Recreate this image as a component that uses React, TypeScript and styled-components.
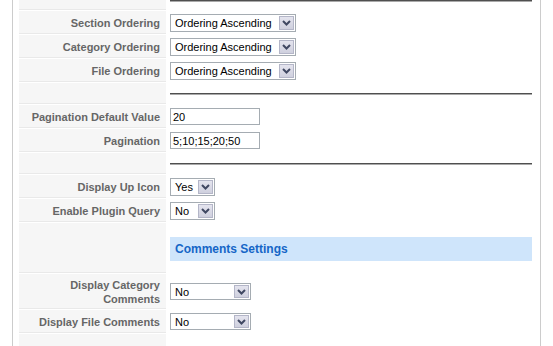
import React from 'react';
import styled, { createGlobalStyle } from 'styled-components';

/* ───────────── global ───────────── */

const GlobalStyle = createGlobalStyle`
	html, body {
		margin: 0;
		padding: 0;
		background: #ffffff;
		overflow: hidden;
	}
	body {
		font-family: "Liberation Sans", Arial, sans-serif;
		font-size: 11px;
	}
`;

/* ───────────── layout ───────────── */

const Frame = styled.div`
	margin-left: 12px;
	width: 521px;
	height: 346px;
	border-left: 1px solid #cccccc;
	border-right: 1px solid #cccccc;
	padding-left: 6px;
	box-sizing: content-box;
	display: flex;
	flex-direction: column;
	gap: 1px;
`;

const Row = styled.div<{ $h: number }>`
	display: grid;
	grid-template-columns: 147px 1fr;
	column-gap: 1px;
	height: ${({ $h }) => $h + 1}px;
	flex-shrink: 0;
`;

const Key = styled.div`
	background: #f6f6f6;
	border-bottom: 1px solid #e9e9e9;
	color: #666666;
	font-weight: bold;
	font-size: 11px;
	line-height: 14px;
	text-align: right;
	padding: 1px 6px 0 4px;
	display: flex;
	align-items: center;
	justify-content: flex-end;
`;

const Value = styled.div<{ $top?: boolean; $pt?: number }>`
	padding: ${({ $pt }) => $pt ?? 0}px 8px 0 3px;
	display: flex;
	align-items: ${({ $top }) => ($top ? 'flex-start' : 'center')};
`;

const Rule = styled.div`
	width: 100%;
	height: 0;
	border-top: 1px solid #4f4f4f;
	border-bottom: 1px solid #a9a9a9;
`;

/* ───────────── form controls ───────────── */

const SelectBox = styled.div<{ $w: number; $hgt: number }>`
	width: ${({ $w }) => $w}px;
	height: ${({ $hgt }) => $hgt}px;
	box-sizing: border-box;
	border: 1px solid #a5acb2;
	background: #ffffff;
	display: flex;
	align-items: stretch;
`;

const SelectText = styled.span`
	flex: 1;
	padding-left: 4px;
	color: #000000;
	font-size: 11px;
	display: flex;
	align-items: center;
	white-space: nowrap;
	overflow: hidden;
`;

const SelectButton = styled.span`
	width: 15px;
	margin: 1px;
	box-sizing: border-box;
	border: 1px solid #b4b6c8;
	background: linear-gradient(#e4e4ee, #cfd0de);
	display: flex;
	align-items: center;
	justify-content: center;
`;

const TextInput = styled.div`
	width: 90px;
	height: 17px;
	box-sizing: border-box;
	border: 1px solid #a5acb2;
	padding-left: 2px;
	font-size: 11px;
	color: #000000;
	display: flex;
	align-items: center;
`;

const SectionBar = styled.div`
	width: 100%;
	height: 24px;
	background: #cfe5fb;
	color: #1566c7;
	font-weight: bold;
	font-size: 12px;
	padding-left: 5px;
	box-sizing: border-box;
	display: flex;
	align-items: center;
`;

/* ───────────── pieces ───────────── */

const Chevron = () => (
	<svg width="9" height="6" viewBox="0 0 9 6">
		<path d="M1 1 L4.5 4.5 L8 1" fill="none" stroke="#404862" strokeWidth="2" />
	</svg>
);

const Select: React.FC<{ value: string; w: number; h?: number }> = ({ value, w, h = 18 }) => (
	<SelectBox $w={w} $hgt={h}>
		<SelectText>{value}</SelectText>
		<SelectButton>
			<Chevron />
		</SelectButton>
	</SelectBox>
);

/* ───────────── page ───────────── */

const App: React.FC = () => (
	<>
		<GlobalStyle />
		<Frame>
			<Row $h={9}>
				<Key />
				<Value $top>
					<Rule />
				</Value>
			</Row>
			<Row $h={22}>
				<Key>Section Ordering</Key>
				<Value>
					<Select value="Ordering Ascending" w={126} />
				</Value>
			</Row>
			<Row $h={22}>
				<Key>Category Ordering</Key>
				<Value>
					<Select value="Ordering Ascending" w={126} />
				</Value>
			</Row>
			<Row $h={22}>
				<Key>File Ordering</Key>
				<Value>
					<Select value="Ordering Ascending" w={126} />
				</Value>
			</Row>
			<Row $h={20}>
				<Key />
				<Value>
					<Rule />
				</Value>
			</Row>
			<Row $h={22}>
				<Key>Pagination Default Value</Key>
				<Value>
					<TextInput>20</TextInput>
				</Value>
			</Row>
			<Row $h={22}>
				<Key>Pagination</Key>
				<Value>
					<TextInput>5;10;15;20;50</TextInput>
				</Value>
			</Row>
			<Row $h={20}>
				<Key />
				<Value>
					<Rule />
				</Value>
			</Row>
			<Row $h={22}>
				<Key>Display Up Icon</Key>
				<Value>
					<Select value="Yes" w={45} />
				</Value>
			</Row>
			<Row $h={22}>
				<Key>Enable Plugin Query</Key>
				<Value>
					<Select value="No" w={45} />
				</Value>
			</Row>
			<Row $h={49}>
				<Key />
				<Value $top $pt={14}>
					<SectionBar>Comments Settings</SectionBar>
				</Value>
			</Row>
			<Row $h={34}>
				<Key>Display Category Comments</Key>
				<Value>
					<Select value="No" w={81} h={17} />
				</Value>
			</Row>
			<Row $h={22}>
				<Key>Display File Comments</Key>
				<Value>
					<Select value="No" w={81} h={17} />
				</Value>
			</Row>
			<Row $h={22}>
				<Key />
				<Value />
			</Row>
		</Frame>
	</>
);

export default App;
